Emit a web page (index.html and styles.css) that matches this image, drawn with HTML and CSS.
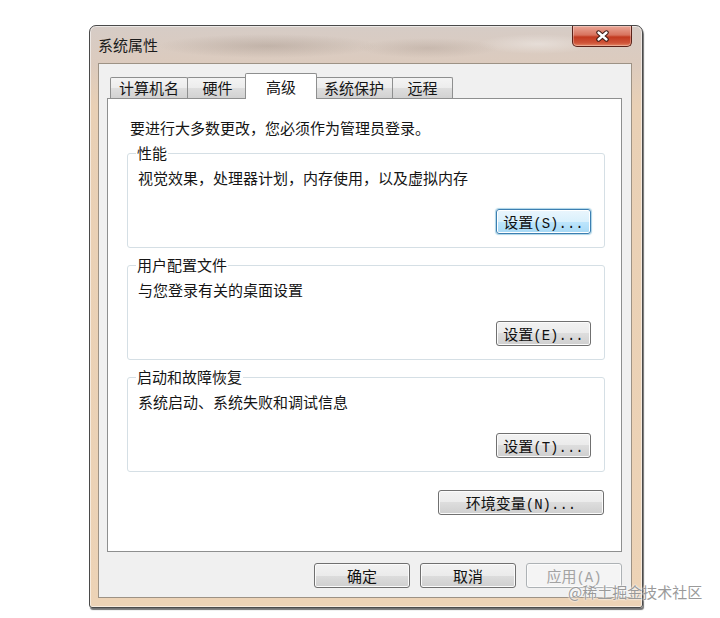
FILE: index.html
```html
<!DOCTYPE html>
<html lang="zh-CN">
<head>
    <meta charset="UTF-8">
    <title>系统属性</title>
    <link rel="stylesheet" href="styles.css">
</head>
<body>
    <div class="window">
        <div class="titlebar">
            <span class="title">系统属性</span>
            <button class="btn-close" aria-label="关闭">
                <svg width="15" height="12" viewBox="0 0 15 12">
                    <path d="M3.5 2.5 L11.5 9.5 M11.5 2.5 L3.5 9.5" stroke="#3c1a14" stroke-width="4.4" stroke-linecap="round" fill="none"/>
                    <path d="M3.5 2.5 L11.5 9.5 M11.5 2.5 L3.5 9.5" stroke="#ffffff" stroke-width="2.4" stroke-linecap="round" fill="none"/>
                </svg>
            </button>
        </div>

        <div class="client">
            <ul class="tabs">
                <li class="tab">计算机名</li>
                <li class="tab">硬件</li>
                <li class="tab tab-active">高级</li>
                <li class="tab">系统保护</li>
                <li class="tab">远程</li>
            </ul>

            <section class="tab-page">
                <p class="intro">要进行大多数更改，您必须作为管理员登录。</p>

                <fieldset class="group">
                    <legend>性能</legend>
                    <p>视觉效果，处理器计划，内存使用，以及虚拟内存</p>
                    <div class="group-actions">
                        <button class="btn btn-focus">设置<span class="mn">(S)...</span></button>
                    </div>
                </fieldset>

                <fieldset class="group">
                    <legend>用户配置文件</legend>
                    <p>与您登录有关的桌面设置</p>
                    <div class="group-actions">
                        <button class="btn">设置<span class="mn">(E)...</span></button>
                    </div>
                </fieldset>

                <fieldset class="group">
                    <legend>启动和故障恢复</legend>
                    <p>系统启动、系统失败和调试信息</p>
                    <div class="group-actions">
                        <button class="btn">设置<span class="mn">(T)...</span></button>
                    </div>
                </fieldset>

                <div class="page-actions">
                    <button class="btn btn-wide">环境变量<span class="mn">(N)...</span></button>
                </div>
            </section>

            <div class="dialog-actions">
                <button class="btn btn-dlg">确定</button>
                <button class="btn btn-dlg">取消</button>
                <button class="btn btn-dlg" disabled>应用<span class="mn">(A)</span></button>
            </div>
        </div>
    </div>

    <div class="watermark">@稀土掘金技术社区</div>
</body>
</html>
```

FILE: styles.css
```css
*{
    box-sizing: border-box;
}
body{
    margin: 0;
    width: 720px;
    height: 618px;
    padding: 25px 0 0 89px;
    background-color: #ffffff;
    position: relative;
    overflow: hidden;
    font-family: "Noto Sans CJK SC", "Liberation Sans", sans-serif;
    color: #151515;
}

/* window frame */
.window{
    width: 554px;
    height: 583px;
    display: flex;
    flex-direction: column;
    padding: 0 10px 9px 8px;
    border: 1px solid #4a4a4a;
    border-radius: 7px 7px 3px 3px;
    background: linear-gradient(#d6ccc6, #dccbbe 38px, #e9d0b5 80px, #edd3b6);
    box-shadow: 1px 2px 1px rgba(0, 0, 0, .55), inset 0 0 0 1px rgba(255, 255, 255, .55);
}
.titlebar{
    height: 37px;
    display: flex;
    justify-content: space-between;
    align-items: flex-start;
    background:
        radial-gradient(ellipse 110px 12px at 170px 20px, rgba(110, 92, 80, .22), transparent),
        radial-gradient(ellipse 70px 10px at 330px 22px, rgba(120, 100, 88, .18), transparent),
        radial-gradient(ellipse 60px 10px at 440px 18px, rgba(255, 255, 255, .35), transparent);
}
.title{
    margin-top: 10px;
    font-size: 15px;
    line-height: 18px;
    color: #1c1c1c;
}
.btn-close{
    width: 60px;
    height: 21px;
    padding: 0;
    display: flex;
    align-items: center;
    justify-content: center;
    border: 1px solid #5b2219;
    border-top: none;
    border-radius: 0 0 5px 5px;
    background: linear-gradient(#eaa797, #d8735e 45%, #c23a20 55%, #cf553a 85%, #e58a68);
    box-shadow: inset 0 0 0 1px rgba(255, 255, 255, .3);
}

/* client area */
.client{
    flex: 1;
    padding: 13px 9px 0 8px;
    border: 1px solid #9d9285;
    background-color: #f0f0f0;
}
.tabs{
    list-style: none;
    margin: 0;
    padding: 0 0 0 3px;
    height: 21px;
    display: flex;
    align-items: flex-end;
}
.tab{
    height: 21px;
    min-width: 61px;
    padding: 0 8px;
    margin-right: -1px;
    border: 1px solid #8e8f8f;
    border-bottom: none;
    border-radius: 2px 2px 0 0;
    background: linear-gradient(#f4f4f4, #ececec 50%, #dedede 50%, #d2d2d2);
    font-size: 15px;
    line-height: 19px;
    text-align: center;
    white-space: nowrap;
}
.tab-active{
    height: 26px;
    min-width: 72px;
    padding-top: 3px;
    margin: 0 -2px -1px -2px;
    background: #ffffff;
    position: relative;
    z-index: 1;
}
.tab-page{
    height: 454px;
    padding: 20px 16px 0 19px;
    border: 1px solid #8e8f8f;
    background-color: #ffffff;
}
.intro{
    margin: 0 0 0 3px;
    font-size: 15px;
    line-height: 18px;
}

/* group boxes */
.group{
    margin: 7px 0 0;
    min-width: 0;
    padding: 7px 13px 13px 10px;
    border: 1px solid #d5dfe5;
    border-radius: 3px;
}
.group + .group{
    margin-top: 8px;
}
.group legend{
    padding: 0 1px;
    margin-left: -2px;
    font-size: 15px;
    line-height: 18px;
}
.group p{
    margin: 0;
    font-size: 15px;
    line-height: 18px;
}
.group-actions{
    display: flex;
    justify-content: flex-end;
    margin-top: 22px;
}
.page-actions{
    display: flex;
    justify-content: flex-end;
    margin-top: 18px;
    padding-right: 1px;
}
.dialog-actions{
    display: flex;
    justify-content: flex-end;
    gap: 10px;
    margin-top: 11px;
}

/* buttons */
.btn{
    width: 95px;
    height: 25px;
    padding: 0;
    border: 1px solid #707070;
    border-radius: 3px;
    background: linear-gradient(#f2f2f2, #ebebeb 50%, #dddddd 50%, #cfcfcf);
    box-shadow: inset 0 0 0 1px #fbfbfb;
    font-family: "Noto Sans CJK SC", sans-serif;
    font-size: 15px;
    line-height: 23px;
    color: #111111;
    white-space: nowrap;
}
.mn{
    font-family: "Liberation Mono", monospace;
    font-size: 14px;
}
.btn-focus{
    border-color: #3c7fb1;
    background: linear-gradient(#eaf6fd, #d9f0fc 50%, #bee6fd 50%, #a7d9f5);
    box-shadow: inset 0 0 0 1px #ffffff, 0 0 1px 1px rgba(70, 160, 200, .45);
}
.btn-wide{
    width: 166px;
}
.btn-dlg{
    width: 96px;
}
.btn:disabled{
    color: #a3a3a3;
    border-color: #adb2b5;
    background: #f4f4f4;
}

.watermark{
    position: absolute;
    left: 568px;
    top: 583px;
    font-size: 15px;
    line-height: 18px;
    color: #9a9a9a;
    text-shadow: 0 0 2px #ffffff, 0 0 2px #ffffff;
}
```
